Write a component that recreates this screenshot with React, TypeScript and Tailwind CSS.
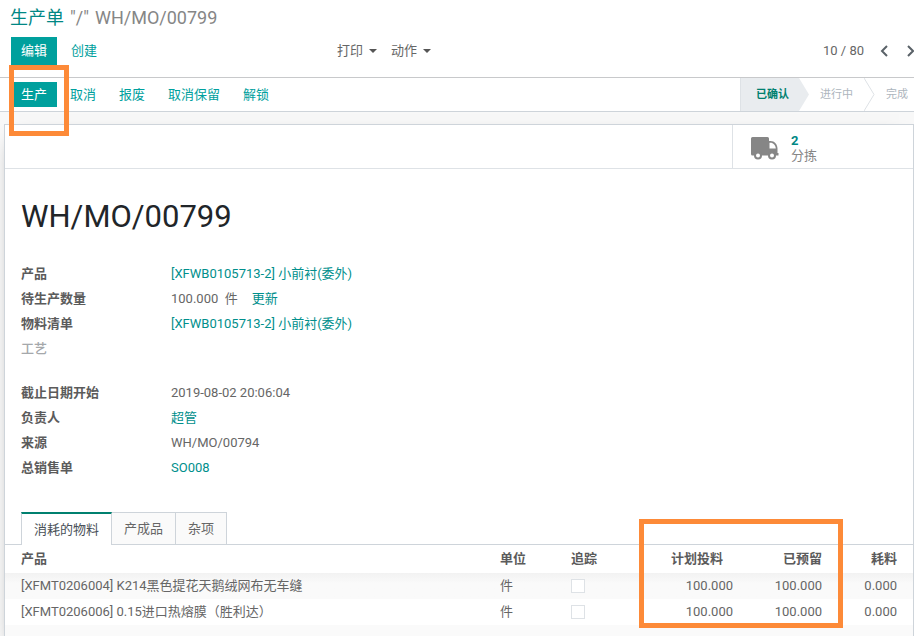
import type { ReactNode } from "react";

const materials = [
  { name: "[XFMT0206004] K214黑色提花天鹅绒网布无车缝", unit: "件", planned: "100.000", reserved: "100.000", used: "0.000" },
  { name: "[XFMT0206006] 0.15进口热熔膜（胜利达）", unit: "件", planned: "100.000", reserved: "100.000", used: "0.000" },
];

function Field({ label, muted, children }: { label: string; muted?: boolean; children?: ReactNode }) {
  return (
    <div className="flex h-[25px] items-center">
      <dt className={muted ? "w-[150px] font-medium text-[#a5a8ab]" : "w-[150px] font-bold text-[#5b5b5b]"}>{label}</dt>
      <dd className="flex items-center">{children}</dd>
    </div>
  );
}

function Link({ children }: { children: ReactNode }) {
  return (
    <a href="#" className="text-[#008f8c]">
      {children}
    </a>
  );
}

function Caret() {
  return (
    <svg className="h-1 w-2" viewBox="0 0 8 4" aria-hidden="true">
      <path d="M0 0h8L4 4z" fill="#555" />
    </svg>
  );
}

function Chevron({ d }: { d: string }) {
  return (
    <svg className="h-3 w-2" viewBox="0 0 8 12" fill="none" stroke="#5a6268" strokeWidth="2" aria-hidden="true">
      <path d={d} />
    </svg>
  );
}

function Truck() {
  return (
    <svg className="h-6 w-7" viewBox="0 0 28 24" aria-hidden="true">
      <path
        fill="#868686"
        fillRule="evenodd"
        d="M1.500 1h15a1.500 1.500 0 0 1 1.500 1.500V5h1.500c4 0 7 3.500 7 7.500V17h1v2.500H1.500A1.500 1.500 0 0 1 0 18V2.500A1.500 1.500 0 0 1 1.500 1zM18.500 6.800V12.500h6.300c-.2-3.200-2.500-5.700-5.300-5.700z"
      />
      <circle cx="7" cy="19.500" r="4" fill="#868686" />
      <circle cx="7" cy="19.500" r="2" fill="#fff" />
      <circle cx="21" cy="19.500" r="4" fill="#868686" />
      <circle cx="21" cy="19.500" r="2" fill="#fff" />
    </svg>
  );
}

export default function App() {
  return (
    <div className="relative flex h-screen flex-col overflow-hidden bg-[#f8f8f8] font-['Roboto','Noto_Sans_CJK_SC',sans-serif] text-[13px] leading-5 text-[#666]">
      <header className="border-b border-[#c8c9cb] bg-white pb-3">
        <h2 className="flex h-9 items-center gap-[6px] pl-[10px] text-[18px] text-[#868686]">
          <a href="#" className="text-[#008784]">生产单</a>
          <span>"/"</span>
          <span>WH/MO/00799</span>
        </h2>
        <div className="mt-px grid h-7 grid-cols-[36%_1fr_auto] items-center">
          <div className="flex items-center pl-[11px]">
            <button className="h-7 bg-[#00a09d] px-[10px] text-white">编辑</button>
            <button className="ml-1 h-7 px-[10px] text-[#00a09d]">创建</button>
          </div>
          <div className="flex items-center gap-[14px] pl-2">
            <button className="flex items-center gap-[6px]">打印 <Caret /></button>
            <button className="flex items-center gap-[6px]">动作 <Caret /></button>
          </div>
          <div className="flex items-center">
            <span className="mr-4">10 / 80</span>
            <button className="mr-[18px]" aria-label="上一页"><Chevron d="M7 1L2 6l5 5" /></button>
            <button aria-label="下一页"><Chevron d="M2 1l5 5-5 5" /></button>
          </div>
        </div>
      </header>

      <div className="flex h-[34px] items-center justify-between border-b border-[#ced4da] bg-white">
        <div className="flex items-center pl-[11px]">
          <button className="h-[25px] bg-[#00a09d] px-[10px] text-white">生产</button>
          <button className="ml-[3px] px-[10px] text-[#00a09d]">取消</button>
          <button className="ml-[3px] px-[10px] text-[#00a09d]">报废</button>
          <button className="ml-[3px] px-[10px] text-[#00a09d]">取消保留</button>
          <button className="ml-[3px] px-[10px] text-[#00a09d]">解锁</button>
        </div>
        <div className="flex h-full items-center text-[11px] text-[#adb5bd]">
          <button className="flex h-full items-center border-l border-[#dee2e6] bg-[#e9ecef] pl-[15px] pr-[10px] font-bold text-[#00806f]">已确认</button>
          <svg className="h-full w-[10px]" viewBox="0 0 10 33" preserveAspectRatio="none" aria-hidden="true">
            <path d="M0 0l10 16.500L0 33z" fill="#e9ecef" />
          </svg>
          <button className="px-[11px]">进行中</button>
          <svg className="h-full w-[11px]" viewBox="0 0 11 33" preserveAspectRatio="none" fill="none" aria-hidden="true">
            <path d="M0 0l10 16.500L0 33" stroke="#dee2e6" />
          </svg>
          <button className="pl-[11px] pr-[6px]">完成</button>
        </div>
      </div>

      <main className="ml-1 mt-3 flex-1 border border-[#ced4da] bg-white shadow-[0_5px_20px_-15px_#000]">
        <div className="flex h-11 justify-end border-b border-[#dee2e6]">
          <button className="flex w-[181px] items-center border-l border-[#dee2e6] pl-[18px] pt-[3px] text-left">
            <Truck />
            <span className="ml-3 flex flex-col leading-[15px] text-[#868686]">
              <span className="font-bold text-[#008784]">2</span>
              <span>分拣</span>
            </span>
          </button>
        </div>

        <div className="px-4">
          <h1 className="mt-7 text-[31px] leading-10 text-[#212529]">WH/MO/00799</h1>
          <dl className="mt-6">
            <Field label="产品"><Link>[XFWB0105713-2] 小前衬(委外)</Link></Field>
            <Field label="待生产数量">
              <span>100.000&nbsp; 件</span>
              <button className="ml-[14px] text-[#008f8c]">更新</button>
            </Field>
            <Field label="物料清单"><Link>[XFWB0105713-2] 小前衬(委外)</Link></Field>
            <Field label="工艺" muted />
          </dl>
          <dl className="mt-[19px]">
            <Field label="截止日期开始">2019-08-02 20:06:04</Field>
            <Field label="负责人"><Link>超管</Link></Field>
            <Field label="来源">WH/MO/00794</Field>
            <Field label="总销售单"><Link>SO008</Link></Field>
          </dl>
        </div>

        <div className="mt-8 flex h-[33px] border-b border-[#ced4da] pl-4" role="tablist">
          <button role="tab" aria-selected="true" className="-mb-px border-x border-t-2 border-x-[#ced4da] border-t-[#00806f] bg-white px-3 text-[#495057]">消耗的物料</button>
          <button role="tab" aria-selected="false" className="border-r border-t border-[#ced4da] bg-[#fafafa] px-3">产成品</button>
          <button role="tab" aria-selected="false" className="border-r border-t border-[#ced4da] bg-[#fafafa] px-3">杂项</button>
        </div>

        <table className="w-full table-fixed">
          <thead>
            <tr className="h-7 text-left text-[#5b5b5b]">
              <th className="pl-4">产品</th>
              <th className="w-[71px]">单位</th>
              <th className="w-[82px]">追踪</th>
              <th className="w-[80px] pr-[10px] text-right">计划投料</th>
              <th className="w-[89px] text-right">已预留</th>
              <th className="w-[91px] pr-4 text-right">耗料</th>
            </tr>
          </thead>
          <tbody>
            {materials.map((m) => (
              <tr key={m.name} className="h-[26px] odd:bg-[#fafafa] first:bg-linear-to-b first:from-[#f2f2f2] first:to-[#fafafa] first:to-40%">
                <td className="pl-4">{m.name}</td>
                <td>{m.unit}</td>
                <td>
                  <input
                    type="checkbox"
                    aria-label={`追踪 ${m.name}`}
                    className="block size-[14px] appearance-none border border-[#dee2e6] bg-white"
                  />
                </td>
                <td className="text-right">{m.planned}</td>
                <td className="text-right">{m.reserved}</td>
                <td className="pr-4 text-right">{m.used}</td>
              </tr>
            ))}
            <tr className="h-[26px] bg-[#fafafa]">
              <td colSpan={6} />
            </tr>
          </tbody>
        </table>
      </main>

      <div className="pointer-events-none absolute left-[9px] top-[65px] h-[71px] w-[60px] border-[5px] border-[#fd8a38]" />
      <div className="pointer-events-none absolute right-[71px] top-[519px] h-[109px] w-[204px] border-[5px] border-[#fd8a38]" />
    </div>
  );
}
